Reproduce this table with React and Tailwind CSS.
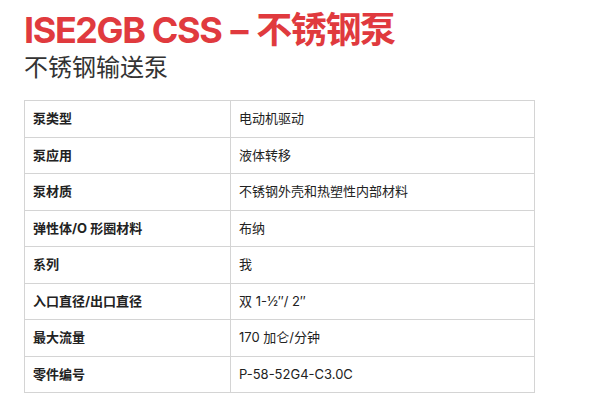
import React from 'react';

const specs = [
  ['泵类型', '电动机驱动'],
  ['泵应用', '液体转移'],
  ['泵材质', '不锈钢外壳和热塑性内部材料'],
  ['弹性体/O 形圈材料', '布纳'],
  ['系列', '我'],
  ['入口直径/出口直径', '双 1-½″/ 2″'],
  ['最大流量', '170 加仑/分钟'],
  ['零件编号', 'P-58-52G4-C3.0C'],
];

export default function App() {
  return (
    <div
      className="min-h-[420px] bg-white px-6 pt-[8px]"
      style={{ fontFamily: 'Inter, "Noto Sans CJK SC", sans-serif' }}
    >
      <h1 className="text-[36px] font-bold leading-[44px] tracking-[-1.4px] text-[#e03a3e]">
        ISE2GB CSS <span className="mx-[2px]">–</span> 不锈钢泵
      </h1>
      <p className="text-[24px] leading-[32px] text-[#333333]">不锈钢输送泵</p>

      <table className="mt-[16px] w-[511px] border-collapse text-[13px] text-[#222222]">
        <tbody>
          {specs.map(([label, value]) => (
            <tr key={label} className="h-[36.5px]">
              <td className="w-[206px] border border-[#d4d4d4] px-2 font-bold">{label}</td>
              <td className="border border-[#d4d4d4] px-2">{value}</td>
            </tr>
          ))}
        </tbody>
      </table>
    </div>
  );
}
